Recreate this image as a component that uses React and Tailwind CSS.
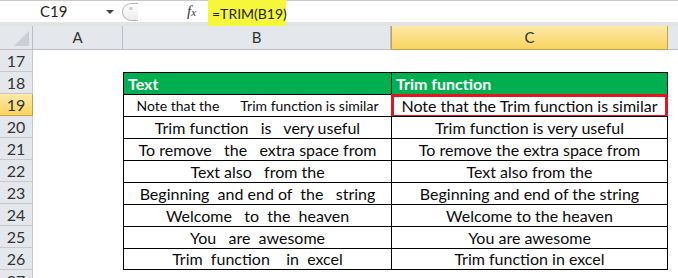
import React from "react";

const rows = [
  { n: 17 },
  { n: 18, head: true },
  { n: 19, b: "Note that the      Trim function is similar", c: "Note that the Trim function is similar", active: true },
  { n: 20, b: "Trim function   is   very useful", c: "Trim function is very useful" },
  { n: 21, b: "To remove   the   extra space from", c: "To remove the extra space from" },
  { n: 22, b: "Text also   from the", c: "Text also from the" },
  { n: 23, b: "Beginning  and end of  the   string", c: "Beginning and end of the string" },
  { n: 24, b: "Welcome   to  the  heaven", c: "Welcome to the heaven" },
  { n: 25, b: "You   are  awesome", c: "You are awesome" },
  { n: 26, b: "Trim  function    in  excel", c: "Trim function in excel", last: true },
  { n: 27 },
];

const font = { fontFamily: "Lato, 'Liberation Sans', sans-serif" };

function FormulaBar() {
  return (
    <div className="flex h-[26px] w-full bg-white text-[15px] text-[#1e1e1e]" style={font}>
      <div className="flex h-full w-[122px] items-center border-t border-b-4 border-t-[#c8c8c8] border-b-[#e3e3e3] pl-[40px]">
        <span className="w-[66px]">C19</span>
        <span className="mt-[1px] h-0 w-0 border-x-[4px] border-t-[4px] border-x-transparent border-t-[#444]" />
      </div>
      <div className="flex h-full w-[86px] items-center border-t border-b-4 border-t-[#c8c8c8] border-b-[#e3e3e3]">
        <div className="flex h-[18px] w-[16px] items-start justify-center rounded-l-full border border-r-0 border-[#b5b5b5] bg-gradient-to-b from-white to-[#ececec] pt-[3px]">
          <span className="h-[3px] w-[4px] rounded-full bg-[#cfcfcf]" />
        </div>
        <span
          className="ml-[49px] text-[15px] italic text-[#333]"
          style={{ fontFamily: "'Liberation Serif', serif" }}
        >
          f<span className="text-[11px]">x</span>
        </span>
      </div>
      <div className="flex h-full w-[78px] items-center bg-[#f6f73b] pl-[4px] text-[14px]">=TRIM(B19)</div>
      <div className="h-full flex-1 border-t border-b-4 border-t-[#c8c8c8] border-b-[#e3e3e3]" />
    </div>
  );
}

function ColumnHeaders() {
  return (
    <div className="flex h-[24px] text-[15px] text-[#333]" style={font}>
      <div className="flex h-full w-[33px] items-end justify-end border-r border-b border-[#b9bec7] bg-[#e4e7ec] pb-[3px] pr-[3px]">
        <svg width="15" height="15" viewBox="0 0 15 15">
          <polygon points="15,0 15,15 0,15" fill="#cbced4" />
        </svg>
      </div>
      <div className="flex h-full w-[90px] items-center justify-center border-r border-b border-[#b9bec7] bg-[#e4e7ec]">A</div>
      <div className="flex h-full w-[268px] items-center justify-center border-r border-b border-[#b9bec7] bg-[#e4e7ec]">B</div>
      <div className="flex h-full w-[277px] items-center justify-center border border-t-0 border-[#c2a24e] bg-gradient-to-b from-[#fde9a6] to-[#f8d45e]">C</div>
      <div className="h-full flex-1 border-b border-[#b9bec7] bg-[#e4e7ec]" />
    </div>
  );
}

function SheetRow({ r }) {
  const inTable = r.head || r.b;
  const edge = inTable ? "border-t border-black" : "";
  const bottom = r.last ? "border-b" : "";
  return (
    <div className="flex h-[22px] text-[16px]" style={font}>
      <div
        className={
          r.active
            ? "flex h-full w-[33px] items-center justify-center border-r border-b border-[#c2a24e] bg-gradient-to-b from-[#fde9a6] to-[#f8d45e] text-[#333]"
            : "flex h-full w-[33px] items-center justify-center border-r border-b border-[#c4c9d1] bg-[#e4e7ec] text-[#333]"
        }
      >
        {r.n}
      </div>
      <div className="h-full w-[90px] bg-white" />
      {inTable ? (
        <>
          <div
            className={`flex h-full w-[268px] items-center border-l ${edge} ${bottom} ${
              r.head ? "bg-[#00b050] pl-[4px] font-bold text-white" : "justify-center bg-white text-[#0a0a0a]"
            }`}
          >
            <span className={r.active ? "whitespace-pre text-[14px]" : "whitespace-pre"}>{r.head ? "Text" : r.b}</span>
          </div>
          <div
            className={`relative flex h-full w-[277px] items-center border-x ${edge} ${bottom} ${
              r.head ? "bg-[#00b050] pl-[4px] font-bold text-white" : "justify-center bg-white text-[#0a0a0a]"
            }`}
          >
            <span className="whitespace-pre">{r.head ? "Trim function" : r.c}</span>
            {r.active && <div className="absolute -top-px -left-px -right-px -bottom-[2px] border-[3px] border-[#e8141c]" />}
          </div>
        </>
      ) : (
        <div className="h-full w-[545px] bg-white" />
      )}
      <div className="h-full flex-1 bg-white" />
    </div>
  );
}

export default function App() {
  return (
    <div className="h-[278px] w-[678px] overflow-hidden bg-white">
      <FormulaBar />
      <ColumnHeaders />
      {rows.map((r) => (
        <SheetRow key={r.n} r={r} />
      ))}
    </div>
  );
}
